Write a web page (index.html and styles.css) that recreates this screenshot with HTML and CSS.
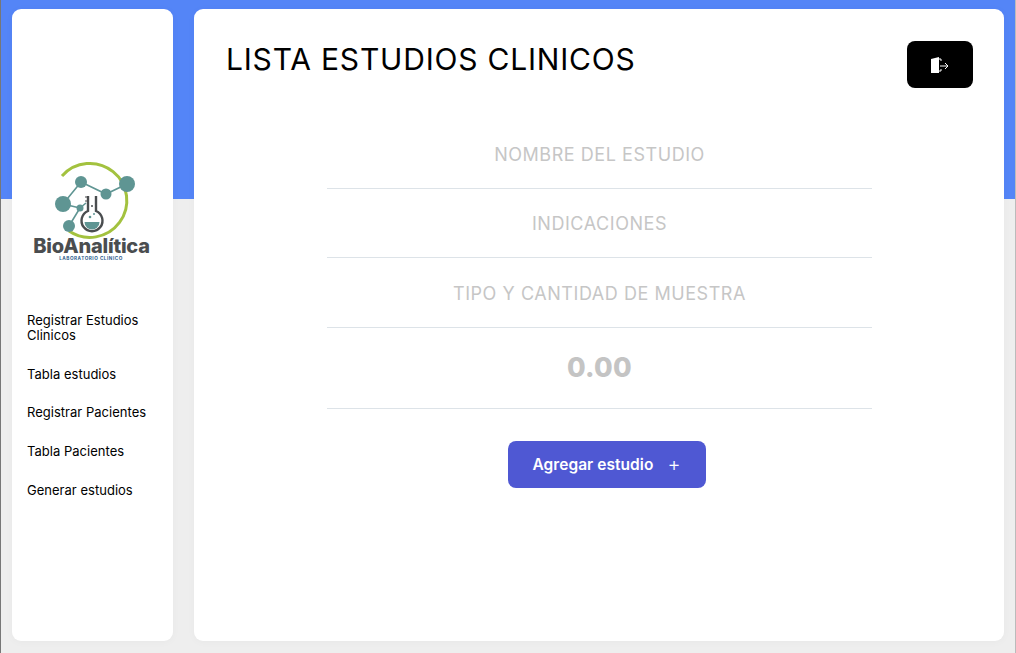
FILE: index.html
```html
<!DOCTYPE html>
<html lang="es">
<head>
<meta charset="utf-8">
<title>Lista estudios clinicos</title>
<link rel="stylesheet" href="styles.css">
</head>
<body>
<div class="app">
  <aside class="sidebar">
    <svg class="logo" width="140" height="120" viewBox="20 150 140 120" aria-label="BioAnalítica">
      <path d="M69 231A37 37 0 1 0 62 176" fill="none" stroke="#a3c23f" stroke-width="3"/>
      <g stroke="#5f9593" stroke-width="1.6" fill="none">
        <path d="M81 182L106 194L127 184M81 182L63 204L80 208L69 226M80 208L86 203"/>
      </g>
      <g fill="#5f9593">
        <circle cx="81" cy="182" r="6"/>
        <circle cx="127" cy="184" r="8"/>
        <circle cx="106" cy="194" r="5.5"/>
        <circle cx="63" cy="204" r="8"/>
        <circle cx="80" cy="208" r="3.5"/>
        <circle cx="69" cy="226" r="6"/>
      </g>
      <path d="M88 196V211A10.5 10.5 0 1 0 96 211V196" fill="none" stroke="#4a4d4f" stroke-width="2.4"/>
      <path d="M85 197H88M85 201H88" stroke="#4a4d4f" stroke-width="1.2"/>
      <path d="M84.5 222H99.500A7.500 7.500 0 0 1 84.500 222Z" fill="#5f9593"/>
      <circle cx="90" cy="217" r="1.3" fill="#5f9593"/>
      <circle cx="94" cy="214" r="1" fill="#5f9593"/>
      <circle cx="92" cy="206" r="1" fill="#4a4d4f"/>
      <text class="logo-name" x="91.500" y="252.500" text-anchor="middle">BioAnalítica</text>
      <text class="logo-sub" x="91" y="260" text-anchor="middle">LABORATORIO CLÍNICO</text>
    </svg>
    <nav class="nav">
      <a class="nav-link">Registrar Estudios Clinicos</a>
      <a class="nav-link">Tabla estudios</a>
      <a class="nav-link">Registrar Pacientes</a>
      <a class="nav-link">Tabla Pacientes</a>
      <a class="nav-link">Generar estudios</a>
    </nav>
  </aside>
  <main class="panel">
    <header class="panel-head">
      <h1 class="title">LISTA ESTUDIOS CLINICOS</h1>
      <button class="exit" aria-label="Salir">
        <svg width="20" height="18" viewBox="0 0 20 18">
          <path d="M1 3L9 1V17H1Z" fill="#fff"/>
          <path d="M9 3H11V5M11 13V15H9" fill="none" stroke="#fff" stroke-width="1"/>
          <path d="M10 10H18M15 7L18 10L15 13" fill="none" stroke="#fff" stroke-width="1"/>
        </svg>
      </button>
    </header>
    <form class="form">
      <div class="field">NOMBRE DEL ESTUDIO</div>
      <div class="field">INDICACIONES</div>
      <div class="field">TIPO Y CANTIDAD DE MUESTRA</div>
      <div class="field field-price">0.00</div>
      <button type="button" class="add">Agregar estudio<span class="plus">+</span></button>
    </form>
  </main>
</div>
</body>
</html>
```
FILE: styles.css
```css
* { box-sizing: border-box; }
html, body { margin: 0; height: 100%; }
body {
  background: linear-gradient(#5485f7 0, #5485f7 199px, #eeeeee 199px);
  font-family: "Inter", "Liberation Sans", sans-serif;
  overflow: hidden;
  border-left: 1px solid #777;
  border-right: 1px solid #bbb;
}
.app {
  display: flex;
  gap: 21px;
  height: 653px;
  padding: 9px 11px 12px 11px;
}
.sidebar, .panel {
  background: #fff;
  border-radius: 9px;
  box-shadow: 0 1px 8px rgba(0,0,0,.03);
}
.sidebar {
  width: 161px;
  flex: none;
  padding-top: 141px;
  display: flex;
  flex-direction: column;
}
.logo { display: block; margin-left: 8px; }
.logo-name { font: 800 20px "Inter", "Liberation Sans", sans-serif; fill: #4a4d4f; letter-spacing: -.2px; }
.logo-sub { font: 700 4.7px "Inter", sans-serif; fill: #2f5f8f; letter-spacing: .5px; }
.nav {
  display: flex;
  flex-direction: column;
  gap: 23.75px;
  padding: 42.75px 20px 0 15px;
}
.nav-link {
  font-size: 13px;
  line-height: 15px;
  color: #000;
  letter-spacing: .02px;
}
.panel {
  flex: 1;
  padding: 32px 31px 0 32px;
}
.panel-head {
  display: flex;
  justify-content: space-between;
  align-items: flex-start;
}
.title {
  margin: 0;
  font-size: 30px;
  font-weight: 400;
  line-height: 36px;
  color: #000;
  letter-spacing: .8px;
}
.exit {
  width: 66px;
  height: 47px;
  border: 0;
  border-radius: 8px;
  background: #000;
  padding: 0;
  display: flex;
  align-items: center;
  justify-content: center;
}
.form {
  display: flex;
  flex-direction: column;
  align-items: center;
  width: 545px;
  margin: 0 0 0 101px;
  padding-top: 31px;
}
.field {
  width: 100%;
  height: 69.500px;
  padding-top: 25px;
  line-height: 22px;
  text-align: center;
  font-size: 18px;
  letter-spacing: .55px;
  color: #c6c6c6;
  border-bottom: 1px solid #dde3e8;
}
.field + .field { padding-top: 24.500px; }
.field-price {
  height: 81px;
  font-size: 27px;
  line-height: 38px;
  font-weight: 800;
  letter-spacing: .3px;
  color: #c4c4c4;
}
.field + .field-price { padding-top: 21px; }
.add {
  width: 198px;
  height: 47px;
  margin: 32px 0 0 14px;
  border: 0;
  border-radius: 8px;
  background: #4f58d3;
  color: #fff;
  font: 600 15.5px "Inter", sans-serif;
  letter-spacing: .05px;
}
.plus { margin-left: 14px; font-size: 20px; font-weight: 300; line-height: 16px; vertical-align: -1px; }
```
